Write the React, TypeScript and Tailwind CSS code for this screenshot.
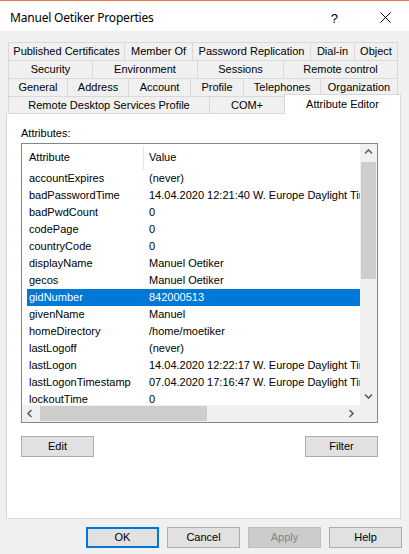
import clsx from "clsx";

type TabDef = { label: string; w: string; last?: boolean };

const tabRows: TabDef[][] = [
  [
    { label: "Published Certificates", w: "w-[116px]" },
    { label: "Member Of", w: "w-[68px]" },
    { label: "Password Replication", w: "w-[118px]" },
    { label: "Dial-in", w: "w-[44px]" },
    { label: "Object", w: "w-[44px]", last: true },
  ],
  [
    { label: "Security", w: "w-[84px]" },
    { label: "Environment", w: "w-[105px]" },
    { label: "Sessions", w: "w-[86px]" },
    { label: "Remote control", w: "w-[115px]", last: true },
  ],
  [
    { label: "General", w: "w-[59px]" },
    { label: "Address", w: "w-[61px]" },
    { label: "Account", w: "w-[62px]" },
    { label: "Profile", w: "w-[53px]" },
    { label: "Telephones", w: "w-[77px]" },
    { label: "Organization", w: "w-[78px]", last: true },
  ],
];

const attributes = [
  ["accountExpires", "(never)"],
  ["badPasswordTime", "14.04.2020 12:21:40 W. Europe Daylight Time"],
  ["badPwdCount", "0"],
  ["codePage", "0"],
  ["countryCode", "0"],
  ["displayName", "Manuel Oetiker"],
  ["gecos", "Manuel Oetiker"],
  ["gidNumber", "842000513"],
  ["givenName", "Manuel"],
  ["homeDirectory", "/home/moetiker"],
  ["lastLogoff", "(never)"],
  ["lastLogon", "14.04.2020 12:22:17 W. Europe Daylight Time"],
  ["lastLogonTimestamp", "07.04.2020 17:16:47 W. Europe Daylight Time"],
  ["lockoutTime", "0"],
];

const Tab = ({ label, w, last }: TabDef) => (
  <div
    className={clsx(
      "flex h-full items-center justify-center border-t border-l border-[#d9d9d9] bg-[#f0f0f0] whitespace-nowrap",
      w,
      last && "border-r"
    )}
  >
    {label}
  </div>
);

const Chevron = ({ dir }: { dir: "up" | "down" | "left" | "right" }) => {
  const d = {
    up: "M1 5.5 L4.5 2 L8 5.5",
    down: "M1 2.5 L4.5 6 L8 2.5",
    left: "M5.5 1 L2 4.5 L5.5 8",
    right: "M2.5 1 L6 4.5 L2.5 8",
  }[dir];
  return (
    <svg width="9" height="9" viewBox="0 0 9 9">
      <path d={d} stroke="#606060" strokeWidth="1.6" fill="none" />
    </svg>
  );
};

const Button = ({ label, className }: { label: string; className?: string }) => (
  <div
    className={clsx(
      "flex h-[21px] w-[73px] items-center justify-center border",
      className ?? "border-[#adadad] bg-[#e1e1e1]"
    )}
  >
    {label}
  </div>
);

const App = () => {
  return (
    <div className="flex h-[554px] w-[409px] flex-col bg-[#f0f0f0] font-['Liberation_Sans',Arial,sans-serif] text-[11px] leading-[13px] text-black">
      {/* title bar */}
      <div className="flex h-[31px] items-center border-t border-[#e8794d] bg-white pt-[2px] pl-[10px] font-['Noto_Sans',sans-serif] text-[12px]">
        <span className="tracking-[-0.2px]">Manuel Oetiker Properties</span>
        <span className="ml-auto mt-[3px] font-['Liberation_Sans',sans-serif] text-[13px]">?</span>
        <svg className="mr-[18px] ml-[42px]" width="11" height="11" viewBox="0 0 11 11">
          <path d="M0.5 0.5 L10.5 10.5 M10.5 0.5 L0.5 10.5" stroke="#000" strokeWidth="1" />
        </svg>
      </div>

      {/* tabs */}
      <div className="mt-[11px] ml-[8px] flex flex-col">
        {tabRows.map((row, i) => (
          <div key={i} className="flex h-[18px]">
            {row.map((t) => (
              <Tab key={t.label} {...t} />
            ))}
          </div>
        ))}
        <div className="flex h-[17px] items-end">
          <Tab label="Remote Desktop Services Profile" w="w-[201px]" />
          <Tab label="COM+" w="w-[75px]" />
          <div className="relative z-10 -mb-px flex h-[20px] w-[117px] items-start justify-center border-t border-r border-l border-[#d9d9d9] bg-white pt-[3px]">
            Attribute Editor
          </div>
        </div>
      </div>

      {/* panel */}
      <div className="ml-[6px] flex h-[406px] w-[395px] flex-col border border-[#d9d9d9] bg-white pl-[14px]">
        <div className="mt-[13px]">Attributes:</div>
        <div className="mt-[3px] flex h-[280px] w-[357px] flex-col border border-[#828790]">
          <div className="flex h-[261px]">
            <div className="w-[338px] overflow-hidden">
              <div className="flex h-[26px]">
                <div className="flex w-[121px] items-center pl-[7px]">Attribute</div>
                <div className="mt-[2px] w-px bg-[#e5e5e5]" />
                <div className="flex items-center pl-[5px]">Value</div>
              </div>
              <div className="flex flex-col pl-[5px]">
                {attributes.map(([name, value]) => (
                  <div
                    key={name}
                    className={clsx(
                      "flex h-[17px] shrink-0 items-center whitespace-nowrap",
                      name === "gidNumber" && "bg-[#0078d7] text-white"
                    )}
                  >
                    <div className="w-[116px] shrink-0 pl-[2px]">{name}</div>
                    <div className="pl-[6px]">{value}</div>
                  </div>
                ))}
              </div>
            </div>
            <div className="flex w-[17px] flex-col bg-[#f0f0f0]">
              <div className="flex h-[17px] items-center justify-center">
                <Chevron dir="up" />
              </div>
              <div className="mx-[1px] mt-[1px] h-[117px] bg-[#cdcdcd]" />
              <div className="flex-1" />
              <div className="flex h-[17px] items-center justify-center">
                <Chevron dir="down" />
              </div>
            </div>
          </div>
          <div className="flex h-[17px]">
            <div className="flex w-[338px] bg-[#f0f0f0]">
              <div className="flex w-[17px] items-center justify-center">
                <Chevron dir="left" />
              </div>
              <div className="my-[1px] ml-[1px] w-[167px] bg-[#cdcdcd]" />
              <div className="flex-1" />
              <div className="flex w-[17px] items-center justify-center">
                <Chevron dir="right" />
              </div>
            </div>
            <div className="w-[17px] bg-[#f0f0f0]" />
          </div>
        </div>
        <div className="mt-[13px] flex w-[357px] justify-between">
          <Button label="Edit" />
          <Button label="Filter" />
        </div>
      </div>

      {/* dialog buttons */}
      <div className="mt-[8px] flex justify-end gap-[8px] pr-[7px]">
        <Button label="OK" className="border-2 border-[#0078d7] bg-[#e1e1e1]" />
        <Button label="Cancel" />
        <Button label="Apply" className="border-[#bfbfbf] bg-[#cccccc] text-[#838383]" />
        <Button label="Help" />
      </div>
    </div>
  );
};

export default App;
